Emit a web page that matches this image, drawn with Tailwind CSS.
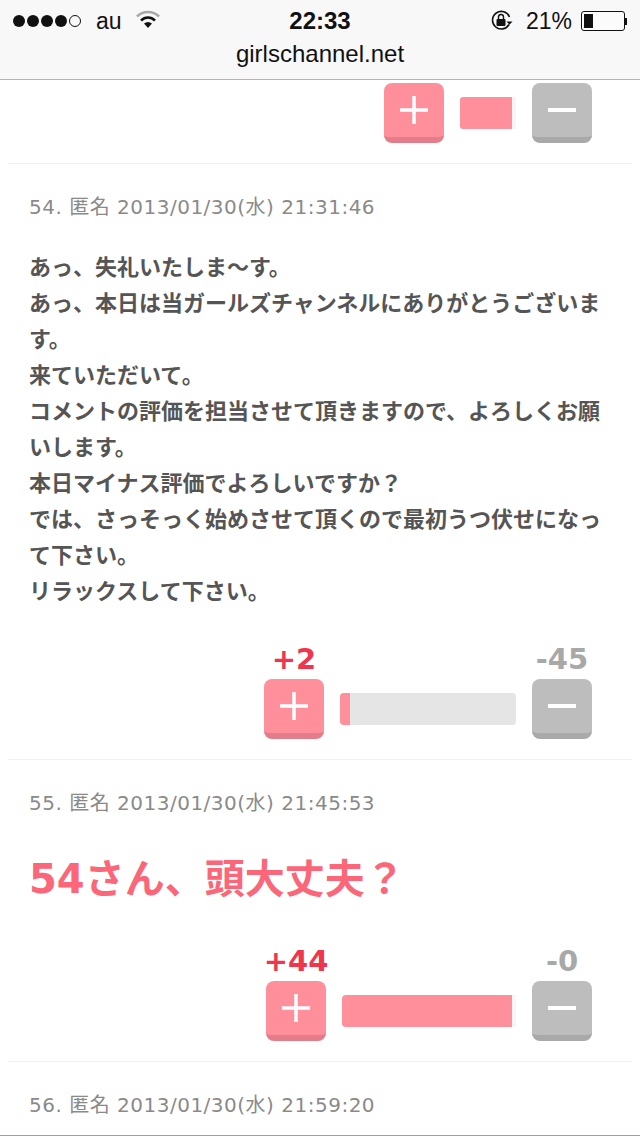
<!DOCTYPE html>
<html lang="ja">
<head>
<meta charset="utf-8">
<script src="https://cdn.jsdelivr.net/npm/@tailwindcss/browser@4"></script>
</head>
<body class="bg-white">
<div class="w-[640px] h-[1136px] overflow-hidden flex flex-col bg-white font-['DejaVu_Sans','Noto_Sans_CJK_JP',sans-serif]">
  <header class="h-[80px] shrink-0 bg-[#f8f8f8] border-b border-[#b4b4b4] font-['Liberation_Sans',sans-serif] text-[#111]">
    <div class="h-[42px] grid grid-cols-3 items-center pl-[13px] pr-[13px]">
      <div class="flex items-center">
        <div class="flex gap-[2px]">
          <span class="w-[12px] h-[12px] rounded-full bg-[#111]"></span>
          <span class="w-[12px] h-[12px] rounded-full bg-[#111]"></span>
          <span class="w-[12px] h-[12px] rounded-full bg-[#111]"></span>
          <span class="w-[12px] h-[12px] rounded-full bg-[#111]"></span>
          <span class="w-[12px] h-[12px] rounded-full border border-[#111]"></span>
        </div>
        <span class="ml-[15px] text-[23px] leading-none">au</span>
        <svg class="ml-[13px] mb-[4px]" width="26" height="20" viewBox="0 0 26 20" fill="none">
          <path d="M2 7.5C8 1.5 18 1.5 24 7.5" stroke="#a8a8a8" stroke-width="2.5"/>
          <path d="M6 11.5C10 7.5 16 7.5 20 11.5" stroke="#111" stroke-width="2.5"/>
          <path d="M9 14.5C11.5 12.5 14.5 12.5 17 14.5L13 19Z" fill="#111"/>
        </svg>
      </div>
      <div class="text-center text-[24px] font-bold leading-none">22:33</div>
      <div class="flex items-center justify-end">
        <svg width="24" height="24" viewBox="0 0 24 24" fill="none">
          <path d="M19 15.5A8.8 8.8 0 1 1 19.5 8" stroke="#111" stroke-width="1.6"/>
          <path d="M16.5 12.5h6l-3 3.2z" fill="#111"/>
          <rect x="6.5" y="10" width="9" height="7" rx="1" fill="#111"/>
          <path d="M8.5 10V8a2.5 2.5 0 0 1 5 0v2" stroke="#111" stroke-width="1.4"/>
        </svg>
        <span class="ml-[12px] text-[23px] leading-none">21%</span>
        <div class="ml-[9px] w-[44px] h-[20px] border border-[#111] rounded-[3px] p-[2px] bg-white/40">
          <div class="w-[9px] h-full bg-[#111]"></div>
        </div>
        <div class="w-[2px] h-[7px] bg-[#111]"></div>
      </div>
    </div>
    <div class="text-center text-[24px] leading-[24px]">girlschannel.net</div>
  </header>

  <main class="flex-1 overflow-hidden px-2">
    <section class="h-[84px] border-b border-[#f1f1f1] pt-[3px] pr-[40px]">
      <div class="flex justify-end gap-4">
        <div class="w-[60px] h-[60px] rounded-[8px] bg-[#ff8f9b] border-b-[6px] border-[#e47c89] flex items-center justify-center">
          <svg width="30" height="30" viewBox="0 0 30 30"><path d="M15 1v28M1 15h28" stroke="#fff" stroke-width="3.5"/></svg>
        </div>
        <div class="w-[56px] h-[32px] mt-[14px] rounded-l-[3px] bg-[#ff8f9b] border-r-[4px] border-[#f6f6f6]"></div>
        <div class="w-[60px] h-[60px] rounded-[8px] bg-[#bdbdbd] border-b-[6px] border-[#a9a9a9] flex items-center justify-center">
          <svg width="30" height="6" viewBox="0 0 30 6"><path d="M1 3h28" stroke="#fff" stroke-width="4"/></svg>
        </div>
      </div>
    </section>

    <section class="h-[596px] border-b border-[#f1f1f1] pt-[29px] pl-[21px] pr-[40px]">
      <p class="text-[20px] leading-[28px] tracking-[0.5px] text-[#8a8a8a]">54. 匿名 2013/01/30(水) 21:31:46</p>
      <p class="mt-[29px] text-[22px] leading-[36px] font-bold text-[#555] w-[582px]">あっ、失礼いたしま〜す。<br>あっ、本日は当ガールズチャンネルにありがとうございます。<br>来ていただいて。<br>コメントの評価を担当させて頂きますので、よろしくお願いします。<br>本日マイナス評価でよろしいですか？<br>では、さっそっく始めさせて頂くので最初うつ伏せになって下さい。<br>リラックスして下さい。</p>
      <div class="mt-[29px] flex justify-end items-end gap-4">
        <div class="w-[60px] flex flex-col items-center">
          <span class="text-[29px] leading-[40px] font-bold text-[#f0354f]">+2</span>
          <div class="w-[60px] h-[60px] rounded-[8px] bg-[#ff8f9b] border-b-[6px] border-[#e47c89] flex items-center justify-center">
            <svg width="30" height="30" viewBox="0 0 30 30"><path d="M15 1v28M1 15h28" stroke="#fff" stroke-width="3.5"/></svg>
          </div>
        </div>
        <div class="w-[176px] h-[32px] mb-[14px] rounded-[4px] bg-[#e5e5e5] overflow-hidden">
          <div class="w-[10px] h-full bg-[#ff8f9b]"></div>
        </div>
        <div class="w-[60px] flex flex-col items-center">
          <span class="text-[29px] leading-[40px] font-bold text-[#a8a8a8]">-45</span>
          <div class="w-[60px] h-[60px] rounded-[8px] bg-[#bdbdbd] border-b-[6px] border-[#a9a9a9] flex items-center justify-center">
            <svg width="30" height="6" viewBox="0 0 30 6"><path d="M1 3h28" stroke="#fff" stroke-width="4"/></svg>
          </div>
        </div>
      </div>
    </section>

    <section class="h-[302px] border-b border-[#f1f1f1] pt-[29px] pl-[21px] pr-[40px]">
      <p class="text-[20px] leading-[28px] tracking-[0.5px] text-[#8a8a8a]">55. 匿名 2013/01/30(水) 21:45:53</p>
      <p class="mt-[37px] text-[40px] leading-[50px] font-bold text-[#fb6678]">54さん、頭大丈夫？</p>
      <div class="mt-[37px] flex justify-end items-end gap-4">
        <div class="w-[60px] flex flex-col items-center">
          <span class="text-[29px] leading-[40px] font-bold text-[#f0354f]">+44</span>
          <div class="w-[60px] h-[60px] rounded-[8px] bg-[#ff8f9b] border-b-[6px] border-[#e47c89] flex items-center justify-center">
            <svg width="30" height="30" viewBox="0 0 30 30"><path d="M15 1v28M1 15h28" stroke="#fff" stroke-width="3.5"/></svg>
          </div>
        </div>
        <div class="w-[174px] h-[32px] mb-[14px] rounded-l-[4px] bg-[#ff8f9b] border-r-[4px] border-[#f6f6f6]"></div>
        <div class="w-[60px] flex flex-col items-center">
          <span class="text-[29px] leading-[40px] font-bold text-[#a8a8a8]">-0</span>
          <div class="w-[60px] h-[60px] rounded-[8px] bg-[#bdbdbd] border-b-[6px] border-[#a9a9a9] flex items-center justify-center">
            <svg width="30" height="6" viewBox="0 0 30 6"><path d="M1 3h28" stroke="#fff" stroke-width="4"/></svg>
          </div>
        </div>
      </div>
    </section>

    <section class="pt-[29px] pl-[21px]">
      <p class="text-[20px] leading-[28px] tracking-[0.5px] text-[#8a8a8a]">56. 匿名 2013/01/30(水) 21:59:20</p>
    </section>
  </main>
  <div class="h-[1px] shrink-0 bg-[#a0a0a0]"></div>
</div>
</body>
</html>
